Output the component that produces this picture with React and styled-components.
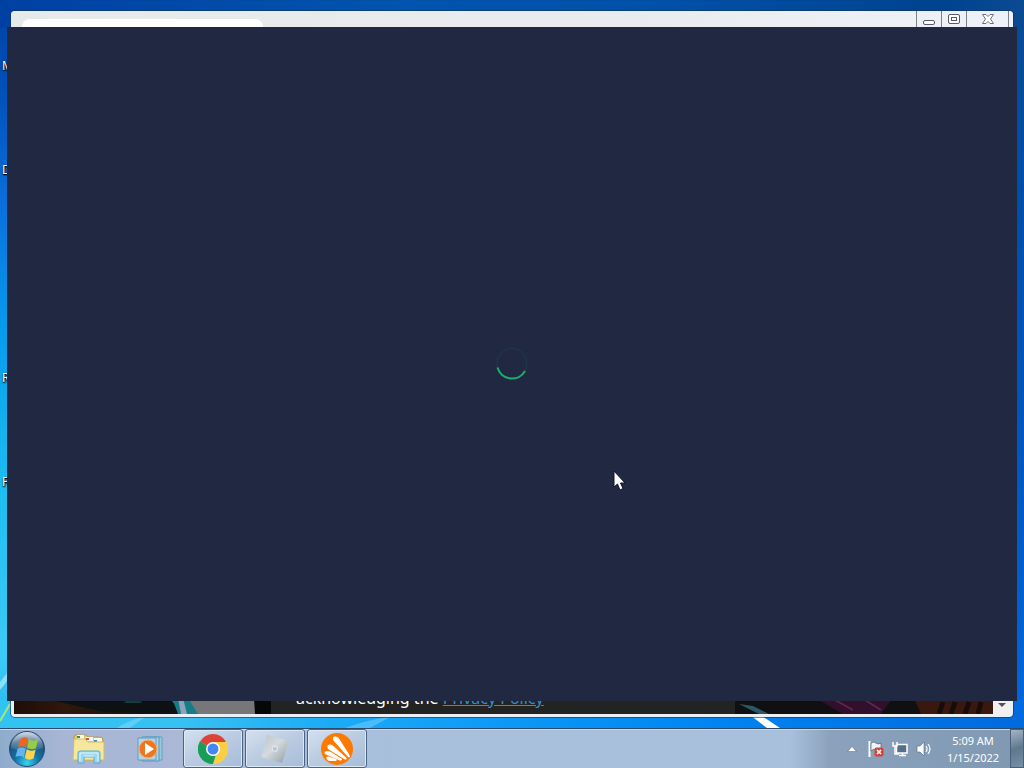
import React from "react";
import styled, { createGlobalStyle, keyframes } from "styled-components";

const Global = createGlobalStyle`
  * { box-sizing: border-box; }
  body { margin: 0; font-family: "Noto Sans", "Open Sans", sans-serif; }
  button { font: inherit; padding: 0; margin: 0; border: 0; background: none; }
  svg { display: block; }
`;

const Screen = styled.div`
  min-height: 100vh;
  display: flex;
  flex-direction: column;
`;

const Desktop = styled.main`
  position: relative;
  flex: 1;
  overflow: hidden;
  background:
    linear-gradient(180deg, #0a4a92, #004fae 30%, #0058c4 65%, #0068de) right / 50% 100% no-repeat,
    linear-gradient(180deg, #0042a6 0%, #0050b8 12%, #0a6fdc 28%, #069bee 45%, #1cbcf2 66%, #3ccbf6 90%, #28b4ee 100%);
`;

const Sky = styled.div`
  position: absolute;
  inset: 0;
  background:
    linear-gradient(90deg, #0040a2, #0054ae 40%, #0050a8 65%, #00438e 92%, #0a4a92) top / 100% 28px no-repeat,
    linear-gradient(90deg, #30c4f2, #38c0f2 18%, #1cacf6 32%, #0c98f6 50%, #0084f2 70%, #006ade) bottom / 100% 28px no-repeat;
`;

const Rays = styled.svg`
  position: absolute;
  inset: auto 0 0 0;
  width: 100%;
  height: 60px;
`;

const Shortcut = styled.span`
  position: absolute;
  left: 2px;
  top: ${(p) => p.$top}px;
  color: #fff;
  font-size: 12px;
  line-height: 16px;
  text-shadow: 1px 1px 2px #000, 0 1px 1px #000;
`;

const BrowserWindow = styled.section`
  position: absolute;
  inset: 11px;
  display: flex;
  flex-direction: column;
  border-radius: 4px;
  background: #eceff3;
  box-shadow: 0 0 0 1px rgba(16, 50, 90, 0.6);
  overflow: hidden;
`;

const TitleBar = styled.header`
  display: flex;
  justify-content: space-between;
  height: 24px;
  padding: 0 4px 0 11px;
  background: linear-gradient(90deg, #e6eaea, #e9ecee 60%, #eef2f8);
`;

const BrowserTab = styled.div`
  width: 241px;
  margin-top: 8px;
  border-radius: 8px 8px 0 0;
  background: #fff;
`;

const Controls = styled.div`
  display: flex;
  border-right: 1px solid #7c8088;
`;

const Control = styled.button`
  display: flex;
  justify-content: center;
  width: ${(p) => p.$width}px;
  padding-top: 2px;
  border-left: 1px solid #7c8088;
`;

const PageView = styled.div`
  flex: 1;
  display: flex;
  margin: 0 3px 3px 3px;
`;

const Page = styled.div`
  flex: 1;
  display: flex;
  align-items: flex-end;
  min-width: 0;
  background: #111;
`;

const Art = styled.svg`
  flex: ${(p) => p.$grow} 1 0;
  min-width: 0;
  height: 24px;
`;

const Consent = styled.p`
  flex: 464 1 0;
  min-width: 0;
  margin: 0;
  padding-bottom: 4px;
  background: #222424;
  color: #fff;
  font-size: 16px;
  line-height: 24px;
  text-indent: 25px;
  white-space: nowrap;
`;

const PolicyLink = styled.a`
  color: #2f8fd0;
  text-decoration: underline;
`;

const ScrollDown = styled.button`
  align-self: flex-end;
  display: flex;
  justify-content: center;
  align-items: flex-end;
  width: 17px;
  height: 16px;
  padding-bottom: 7px;
  background: #f0f0f0;
`;

const LoadingWindow = styled.section`
  position: absolute;
  inset: 27px 7px;
  display: flex;
  justify-content: center;
  align-items: center;
  background: #212942;
`;

const Pointer = styled.svg`
  position: absolute;
  left: 613px;
  top: 470px;
`;

const Taskbar = styled.footer`
  display: flex;
  align-items: stretch;
  height: 40px;
  border-top: 1px solid #2c4a6c;
  box-shadow: inset 0 1px 0 #c6d8ea;
  background: linear-gradient(90deg, #8fabcc 0, #a6b6d4 60px, #adb9d8 240px, #a8c0dc 400px, #a8c0dc 790px, #8ca2bc 830px, #8098b2 100%);
`;

const TaskButton = styled.button`
  display: flex;
  justify-content: center;
  align-items: center;
  width: 60px;
  margin-right: 2px;
  border: 1px solid ${(p) => (p.$open ? "#4a6484" : "transparent")};
  border-radius: 3px;
  background: ${(p) => (p.$open ? "linear-gradient(150deg, #d4e0f0, #bccde2 45%, #a6bcd8)" : "none")};
  box-shadow: ${(p) => (p.$open ? "inset 0 0 0 1px #dce8f4" : "none")};
`;

const StartButton = styled.button`
  display: flex;
  align-items: center;
  width: 59px;
  padding-left: 8px;
`;

const Tray = styled.div`
  display: flex;
  align-items: center;
  gap: 8px;
  margin-left: auto;
`;

const TrayButton = styled.button`
  display: flex;
  justify-content: center;
  width: 16px;
`;

const Clock = styled.time`
  width: 58px;
  margin-left: 4px;
  color: #fff;
  font-size: 11px;
  line-height: 17px;
  text-align: center;
`;

const ShowDesktop = styled.button`
  align-self: stretch;
  width: 14px;
  border: 1px solid #4a6078;
  background: linear-gradient(160deg, #a4b6c8, #60788e 50%, #7890a6);
`;

const spin = keyframes`to { transform: rotate(360deg); }`;

const Ring = styled.svg`
  animation: ${spin} 1s linear infinite paused;
`;

const Spinner = () => (
  <Ring width="34" height="34" viewBox="0 0 34 34" role="img" aria-label="Loading">
    <circle cx="17" cy="16.500" r="15" fill="none" stroke="#1c3c4a" strokeWidth="1" />
    <path d="M2.500 20.500 A15 15 0 0 0 30 24" fill="none" stroke="#1fb070" strokeWidth="2" />
  </Ring>
);

const StartLogo = () => (
  <svg width="38" height="38" viewBox="0 0 38 38">
    <defs>
      <radialGradient id="orb" cx="50%" cy="90%" r="90%">
        <stop offset="0" stopColor="#38d4ee" />
        <stop offset=".4" stopColor="#1070a4" />
        <stop offset=".75" stopColor="#20507a" />
        <stop offset="1" stopColor="#7898b8" />
      </radialGradient>
      <linearGradient id="orbShine" x2="0" y2="1">
        <stop offset="0" stopColor="#fff" stopOpacity=".65" />
        <stop offset="1" stopColor="#fff" stopOpacity=".05" />
      </linearGradient>
    </defs>
    <circle cx="19" cy="19" r="17.500" fill="url(#orb)" stroke="#294d70" />
    <path d="M3 18A16 16 0 0 1 35 18Q19 24 3 18Z" fill="url(#orbShine)" />
    <path d="M12.500 9Q16 6 20 8.500L18 17.500Q14 15 10 17.500Z" fill="#ee6425" />
    <path d="M21 9Q25 12 30 9.500L28 18Q23.500 20.500 19 17.800Z" fill="#94cf43" />
    <path d="M9.600 18.700Q13.500 16.500 17.700 18.700L15.800 27.500Q12 24.800 7.500 27Z" fill="#62b5ed" />
    <path d="M18.700 19.200Q23 22 27.700 19.500L25.500 28.500Q21 31 16.800 28Z" fill="#ffd34b" />
  </svg>
);

const ExplorerIcon = () => (
  <svg width="34" height="32" viewBox="0 0 34 32">
    <path d="M2 4Q2 2 4 2h10l2 2h12q3 0 3 3v20H2Z" fill="#e4ca70" stroke="#b99c48" />
    <path d="M5 2h7v4H5zM14 4h7v4h-7zM22 5h8v4h-8z" fill="#f7f8ef" />
    <path d="M5 3h3v2H5z" fill="#2d9b46" /><path d="M14 5h3v2h-3z" fill="#d65536" /><path d="M22 7h3v2h-3z" fill="#3c87c8" />
    <path d="M2 6h11l3 3h16v18H1Z" fill="#f5e89c" stroke="#d5bd65" />
    <path d="M6 28V20q0-2 2-2h18q2 0 2 2v10h-6v-6H12v6H6Z" fill="#9dd7f1" stroke="#58aad5" />
    <path d="M8 28v-8h18v8M12 23h10" fill="none" stroke="#e1f6fc" />
  </svg>
);

const MediaIcon = () => (
  <svg width="28" height="28" viewBox="0 0 28 28">
    <path d="M8 2h17v23H8Z" fill="#9bc9df" stroke="#62a1c4" />
    <path d="M5 2h17v24H5Z" fill="#acd4e6" stroke="#5397bd" />
    <path d="M1 3h18v22H1Z" fill="#b7d4e5" stroke="#5c9cc4" />
    <circle cx="11" cy="14" r="9" fill="#ef7621" stroke="#f9ad70" />
    <path d="M8 8l9 6-9 6Z" fill="#fff" />
  </svg>
);

const ChromeIcon = () => (
  <svg width="30" height="30" viewBox="0 0 30 30">
    <path d="M15 15 2.010 7.500A15 15 0 0 1 27.990 7.500Z" fill="#dc4437" />
    <path d="M15 15 27.990 7.500A15 15 0 0 1 15 30Z" fill="#fcce43" />
    <path d="M15 15V30A15 15 0 0 1 2.010 7.500Z" fill="#189e58" />
    <path d="M15 8H28.200A15 15 0 0 1 15 30L21 18.500Z" fill="#fcce43" />
    <path d="M2.010 7.500 9 18.500 17.500 22 15 30A15 15 0 0 1 2.010 7.500Z" fill="#189e58" />
    <circle cx="15" cy="15" r="7" fill="#fff" />
    <circle cx="15" cy="15" r="5.500" fill="#4387f4" />
  </svg>
);

const RobloxIcon = () => (
  <svg width="30" height="30" viewBox="0 0 30 30">
    <defs>
      <linearGradient id="steel" x2="1" y2="1"><stop stopColor="#bcc5ca" /><stop offset=".45" stopColor="#d4dade" /><stop offset="1" stopColor="#909ba0" /></linearGradient>
    </defs>
    <path d="M7 1 29 7 22 29 1 23Z" fill="url(#steel)" />
    <path d="M13 12 17.500 13 16.500 17.500 12 16.500Z" fill="#b9c6ce" stroke="#e6ecf0" />
  </svg>
);

const AvastIcon = () => (
  <svg width="32" height="32" viewBox="0 0 32 32">
    <circle cx="16" cy="16" r="16" fill="#ff7800" />
    <g fill="#fff">
      <path d="M12 7Q11 3 15 3.500Q18 4 19 7L28.500 22Q29.500 25.500 27 24Z" />
      <path d="M7 16Q5 11.500 9 11.500Q11 11.500 13 13.500L25.500 25Q26.500 27.500 23 26Z" />
      <path d="M4 21Q2.500 18 6 18Q8 18 10 19L21 26Q22 28 18 27.200Z" />
      <path d="M5.500 25.500Q4.500 23.500 7.500 23.500L15 26Q17 27.500 14 28L9 28Q6.500 28 5.500 25.500Z" />
    </g>
  </svg>
);

const App = () => (
  <Screen>
    <Global />
    <Desktop>
      <Sky />
      <Rays viewBox="0 0 1024 60" preserveAspectRatio="none" aria-hidden="true">
        <path d="M0 14 8 4V12L0 22Z" fill="#b4eafa" opacity=".7" />
        <path d="M0 53 10 36" stroke="#a8e67c" strokeWidth="2" />
        <path d="M117 60Q128 52 145 49L130 60ZM345 60Q366 52 390 49L370 60Z" fill="#bdefff" opacity=".3" />
        <path d="M750 47 762 48 780 60H767Z" fill="#fff" />
      </Rays>
      <Shortcut $top={58}>M</Shortcut>
      <Shortcut $top={162}>D</Shortcut>
      <Shortcut $top={370}>R</Shortcut>
      <Shortcut $top={474}>F</Shortcut>

      <BrowserWindow aria-label="Browser">
        <TitleBar>
          <BrowserTab />
          <Controls>
            <Control $width={25} aria-label="Minimize">
              <svg width="14" height="14" viewBox="0 0 14 14"><rect x="1.500" y="7.500" width="11" height="4" rx="1.500" fill="#fff" stroke="#565a62" /></svg>
            </Control>
            <Control $width={25} aria-label="Maximize">
              <svg width="14" height="14" viewBox="0 0 14 14"><rect x="1.500" y="1.500" width="11" height="9" rx="1.500" fill="#fff" stroke="#565a62" /><rect x="4.500" y="4.500" width="5" height="3" fill="#fff" stroke="#565a62" /></svg>
            </Control>
            <Control $width={42} aria-label="Close">
              <svg width="14" height="14" viewBox="0 0 14 14"><path d="M1.500 1.500h3.500L7 3.500 9 1.500h3.500L9.500 6l3 4.500H9L7 8.500 5 10.500H1.500l3-4.500Z" fill="#fff" stroke="#6c7078" /></svg>
            </Control>
          </Controls>
        </TitleBar>
        <PageView>
          <Page>
            <Art $grow={257} viewBox="0 0 257 24" preserveAspectRatio="none" aria-hidden="true">
              <defs>
                <linearGradient id="wood"><stop stopColor="#1c0e08" /><stop offset=".2" stopColor="#30180c" /><stop offset=".5" stopColor="#101112" /></linearGradient>
              </defs>
              <path d="M0 0H257V24H0Z" fill="url(#wood)" />
              <path d="M28 8H160V22H90Z" fill="#0c1214" />
              <path d="M112 11H126L128 13H110Z" fill="#104038" />
              <path d="M156 8 168 24H257V8Z" fill="#77777a" />
              <path d="M158 8H174L184 24H164Z" fill="#157c8a" />
              <path d="M164 8H169L173 24H167Z" fill="#8ca4b8" />
              <path d="M240 8H257V24H241Z" fill="#060808" />
            </Art>
            <Consent>acknowledging the <PolicyLink href="#privacy">Privacy Policy</PolicyLink></Consent>
            <Art $grow={258} viewBox="0 0 258 24" preserveAspectRatio="none" aria-hidden="true">
              <path d="M0 0H258V24H0Z" fill="#101012" />
              <path d="M4 14 18 16 34 24H24Z" fill="#2a5866" />
              <path d="M84 10H156L146 24H108Z" fill="#32102c" />
              <path d="M100 10 118 20M130 10 146 20" stroke="#602650" strokeWidth="2" />
              <path d="M180 10H258V24H186Z" fill="#38180f" />
              <path d="M208 12 204 24M220 12 216 24M234 12 230 24M246 12 243 24" stroke="#180c0b" strokeWidth="5" />
            </Art>
          </Page>
          <ScrollDown aria-label="Scroll down">
            <svg width="8" height="4" viewBox="0 0 8 4"><path d="M0 0H8L4 4Z" fill="#505050" /></svg>
          </ScrollDown>
        </PageView>
      </BrowserWindow>

      <LoadingWindow aria-label="Setup">
        <Spinner />
      </LoadingWindow>
      <Pointer width="14" height="22" viewBox="0 0 14 22" aria-hidden="true">
        <path d="M1 1V17L4.500 14 7 20 10 18.500 7.500 13H12Z" fill="#fff" stroke="#10152a" />
      </Pointer>
    </Desktop>

    <Taskbar>
      <StartButton aria-label="Start"><StartLogo /></StartButton>
      <TaskButton aria-label="Windows Explorer"><ExplorerIcon /></TaskButton>
      <TaskButton aria-label="Media Player"><MediaIcon /></TaskButton>
      <TaskButton $open aria-label="Chrome"><ChromeIcon /></TaskButton>
      <TaskButton $open aria-label="Roblox"><RobloxIcon /></TaskButton>
      <TaskButton $open aria-label="Avast"><AvastIcon /></TaskButton>
      <Tray>
        <TrayButton aria-label="Show hidden icons">
          <svg width="12" height="16" viewBox="0 0 12 16"><path d="M1.500 10.500 6 5.500 10.500 10.500Z" fill="#fff" stroke="#52667e" strokeWidth=".5" /></svg>
        </TrayButton>
        <TrayButton aria-label="Action Center">
          <svg width="16" height="16" viewBox="0 0 16 16">
            <path d="M1.500 0V16" stroke="#fff" strokeWidth="2" /><path d="M3 2Q6 0 8 2T13 2V10Q10 11 8 9T3 10Z" fill="#eef3f8" stroke="#455b72" strokeWidth=".7" />
            <rect x="6.500" y="6.500" width="9" height="9" rx="2" fill="#d24538" /><path d="M9 9 13 13M13 9 9 13" stroke="#fff" strokeWidth="1.700" />
          </svg>
        </TrayButton>
        <TrayButton aria-label="Network">
          <svg width="16" height="16" viewBox="0 0 16 16">
            <path d="M4.500 3.500H15V12H4.500ZM7 14.500H14M10.500 12V14" fill="#566f88" stroke="#fff" strokeWidth="1.500" />
            <path d="M1 1V5H5V1M3 5V13H7" fill="none" stroke="#fff" strokeWidth="1.500" />
          </svg>
        </TrayButton>
        <TrayButton aria-label="Volume">
          <svg width="16" height="16" viewBox="0 0 16 16">
            <path d="M1 5H4L8 1V15L4 11H1Z" fill="#fff" stroke="#536a82" strokeWidth=".6" />
            <path d="M10 5Q12 8 10 11M12 3Q16 8 12 13" fill="none" stroke="#fff" strokeWidth="1.200" />
          </svg>
        </TrayButton>
        <Clock>5:09 AM<br />1/15/2022</Clock>
        <ShowDesktop aria-label="Show desktop" />
      </Tray>
    </Taskbar>
  </Screen>
);

export default App;
